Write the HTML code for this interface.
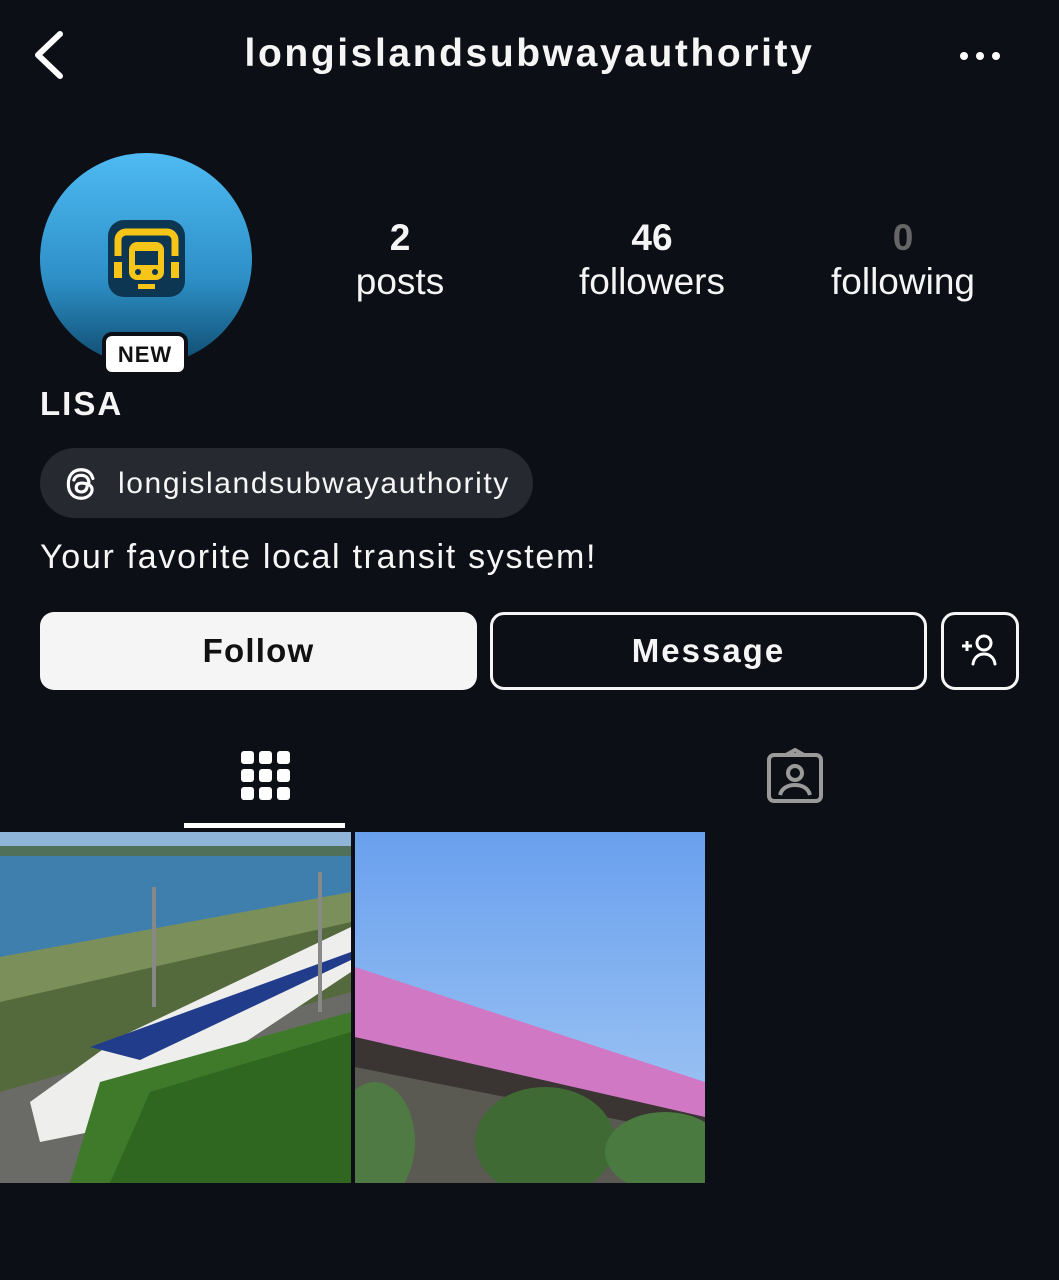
<!DOCTYPE html>
<html><head><meta charset="utf-8"><style>
body{margin:0;width:1059px;height:1280px;background:#0c0f15;font-family:"Liberation Sans",sans-serif;color:#f5f5f5;position:relative;overflow:hidden}
.a{position:absolute}
.b{font-weight:bold}
</style></head><body>
<svg class="a" style="left:30px;top:30px" width="36" height="50" viewBox="0 0 36 50"><path d="M30 4 L8 25 L30 46" fill="none" stroke="#fff" stroke-width="6" stroke-linecap="round" stroke-linejoin="round"/></svg>
<div class="a b" style="left:0;width:1059px;text-align:center;top:32px;font-size:39px;letter-spacing:2.6px">longislandsubwayauthority</div>
<div class="a" style="left:960px;top:52px;width:40px;height:8px">
<span class="a" style="left:0;width:8px;height:8px;border-radius:50%;background:#fff"></span><span class="a" style="left:16px;width:8px;height:8px;border-radius:50%;background:#fff"></span><span class="a" style="left:32px;width:8px;height:8px;border-radius:50%;background:#fff"></span></div>
<div class="a" style="left:40px;top:153px;width:212px;height:212px;border-radius:50%;background:linear-gradient(#4fbaf3,#2d8fc6 60%,#0f4a6e)"></div>
<svg class="a" style="left:108px;top:220px" width="77" height="77" viewBox="0 0 77 77"><rect width="77" height="77" rx="16" fill="#0c3652"/>
<path d="M10 36 V20 a8 8 0 0 1 8-8 h41 a8 8 0 0 1 8 8 V36" fill="none" stroke="#f5c518" stroke-width="7"/>
<rect x="6" y="42" width="8" height="16" fill="#f5c518"/><rect x="63" y="42" width="8" height="16" fill="#f5c518"/>
<rect x="21" y="22" width="35" height="38" rx="8" fill="#f5c518"/><rect x="27" y="31" width="23" height="14" fill="#0c3652"/>
<circle cx="30" cy="52" r="3" fill="#0c3652"/><circle cx="47" cy="52" r="3" fill="#0c3652"/>
<rect x="30" y="64" width="17" height="5" fill="#f5c518"/></svg>
<div class="a b" style="left:102px;top:332px;width:86px;height:44px;background:#fff;border:4px solid #0c0f15;border-radius:10px;box-sizing:border-box;color:#111;text-align:center;font-size:22px;line-height:38px;letter-spacing:1px">NEW</div>
<div class="a b" style="left:40px;top:385px;font-size:33px;letter-spacing:2px">LISA</div>
<div class="a" style="left:300px;width:200px;text-align:center;top:216px;font-size:37px;line-height:44px"><b>2</b><br>posts</div>
<div class="a" style="left:552px;width:200px;text-align:center;top:216px;font-size:37px;line-height:44px"><b>46</b><br>followers</div>
<div class="a" style="left:803px;width:200px;text-align:center;top:216px;font-size:37px;line-height:44px"><b style="color:#666">0</b><br>following</div>
<div class="a" style="left:40px;top:448px;width:493px;height:70px;border-radius:35px;background:#262a30"></div>
<svg class="a" style="left:62px;top:465px" width="38" height="38" viewBox="0 0 24 24"><path d="M17 11c-.3-3-2.2-4.5-5-4.5-2.5 0-4 1.3-4.5 3M12 21c-5 0-8-3.5-8-9s3-9 8-9c4 0 6.5 2 7.5 5.5M9 14.5c0 1.6 1.5 2.5 3 2.5 2.5 0 4-1.5 4-5 1.5.5 3 1.7 3 3.5 0 3-3 5.5-7 5.5M16 12c-1.5-.5-3-.7-4.3-.5-1.8.2-2.7 1.3-2.7 3" fill="none" stroke="#fff" stroke-width="2" stroke-linecap="round"/></svg>
<div class="a" style="left:118px;top:467px;font-size:30px;letter-spacing:1.6px">longislandsubwayauthority</div>
<div class="a" style="left:40px;top:538px;font-size:34px;letter-spacing:1.7px">Your favorite local transit system!</div>
<div class="a b" style="left:40px;top:612px;width:437px;height:78px;border-radius:14px;background:#f5f5f5;color:#111;text-align:center;line-height:78px;font-size:33px;letter-spacing:1.2px">Follow</div>
<div class="a b" style="left:490px;top:612px;width:437px;height:78px;border-radius:14px;border:3px solid #f5f5f5;box-sizing:border-box;text-align:center;line-height:72px;font-size:33px;letter-spacing:2px">Message</div>
<div class="a" style="left:941px;top:612px;width:78px;height:78px;border-radius:14px;border:3px solid #f5f5f5;box-sizing:border-box"></div>
<svg class="a" style="left:958px;top:632px" width="44" height="38" viewBox="0 0 44 38"><path d="M4 14h10M9 9v10" stroke="#fff" stroke-width="3"/><circle cx="26" cy="11" r="7" fill="none" stroke="#fff" stroke-width="3"/><path d="M15 32c1-7 6-10 11-10s10 3 11 10" fill="none" stroke="#fff" stroke-width="3" stroke-linecap="round"/></svg>
<svg class="a" style="left:240px;top:750px" width="52" height="52" viewBox="0 0 52 52" fill="#fff"><rect x="1" y="1" width="13" height="13" rx="3"/><rect x="19" y="1" width="13" height="13" rx="3"/><rect x="37" y="1" width="13" height="13" rx="3"/><rect x="1" y="19" width="13" height="13" rx="3"/><rect x="19" y="19" width="13" height="13" rx="3"/><rect x="37" y="19" width="13" height="13" rx="3"/><rect x="1" y="37" width="13" height="13" rx="3"/><rect x="19" y="37" width="13" height="13" rx="3"/><rect x="37" y="37" width="13" height="13" rx="3"/></svg>
<div class="a" style="left:184px;top:823px;width:161px;height:5px;background:#fff"></div>
<svg class="a" style="left:766px;top:748px" width="58" height="56" viewBox="0 0 58 56"><rect x="3" y="7" width="52" height="46" rx="5" fill="none" stroke="#9a9a9a" stroke-width="4"/><path d="M20 7 L29 2 L38 7" fill="none" stroke="#9a9a9a" stroke-width="4"/><circle cx="29" cy="25" r="7" fill="none" stroke="#9a9a9a" stroke-width="4"/><path d="M14 47c2-7 8-10 15-10s13 3 15 10" fill="none" stroke="#9a9a9a" stroke-width="4"/></svg>
<svg class="a" style="left:0;top:832px" width="351" height="351" viewBox="0 0 351 351">
<rect width="351" height="351" fill="#3a7ba8"/><rect width="351" height="14" fill="#8fb5d8"/><rect y="14" width="351" height="10" fill="#51705a"/>
<rect y="24" width="351" height="110" fill="#3f7fae"/>
<polygon points="0,125 351,60 351,351 0,351" fill="#7a8f5a"/>
<polygon points="0,170 351,90 351,351 0,351" fill="#556a3c"/>
<polygon points="0,260 351,160 351,351 0,351" fill="#6a6b66"/>
<polygon points="30,270 120,205 351,95 351,140 200,240 90,300 40,310" fill="#eeeeec"/>
<polygon points="90,215 351,120 351,128 140,228" fill="#213c8a"/>
<polygon points="100,250 351,180 351,351 70,351" fill="#3e7a2a"/>
<polygon points="150,260 351,200 351,351 110,351" fill="#2f6620"/>
<rect x="152" y="55" width="4" height="120" fill="#888"/><rect x="318" y="40" width="4" height="140" fill="#888"/>
</svg>
<svg class="a" style="left:355px;top:832px" width="350" height="351" viewBox="0 0 350 351">
<defs><linearGradient id="s" x1="0" y1="0" x2="0" y2="1"><stop offset="0" stop-color="#69a0ee"/><stop offset="1" stop-color="#a9ccf4"/></linearGradient></defs>
<rect width="350" height="351" fill="url(#s)"/>
<polygon points="0,135 350,250 350,290 0,210" fill="#d078c4"/>
<polygon points="0,205 350,285 350,310 0,240" fill="#3a3432"/>
<polygon points="0,235 350,305 350,351 0,351" fill="#5a5a52"/>
<ellipse cx="20" cy="310" rx="40" ry="60" fill="#4f7a44"/><ellipse cx="190" cy="310" rx="70" ry="55" fill="#3f6a34"/><ellipse cx="310" cy="320" rx="60" ry="40" fill="#4a7a40"/>
</svg>
</body></html>
